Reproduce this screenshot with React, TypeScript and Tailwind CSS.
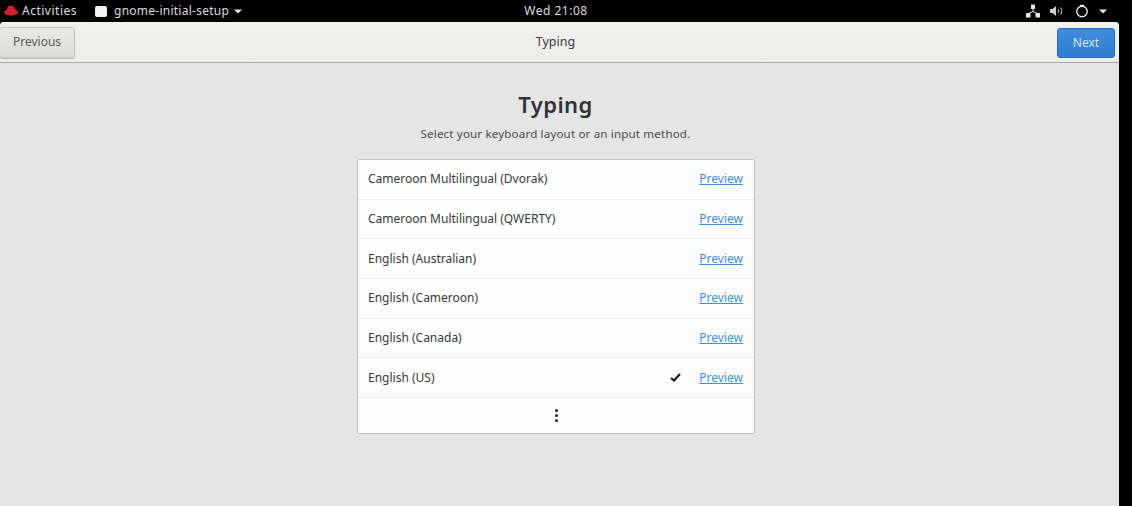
import React from 'react';

const layouts = [
  { name: 'Cameroon Multilingual (Dvorak)' },
  { name: 'Cameroon Multilingual (QWERTY)' },
  { name: 'English (Australian)' },
  { name: 'English (Cameroon)' },
  { name: 'English (Canada)' },
  { name: 'English (US)', selected: true },
];

const Caret = () => (
  <svg width="8" height="5" viewBox="0 0 8 5" className="block">
    <path d="M0 0.5h8L4 4.5z" fill="#e8e8e8" />
  </svg>
);

const TopBar = () => (
  <div className="grid h-[22px] shrink-0 grid-cols-[1fr_auto_1fr] items-center bg-black text-[12px] tracking-[0.5px] text-[#dcdcdc]">
    <div className="flex items-center">
      <svg width="16" height="12" viewBox="0 0 16 12" className="ml-[3px]">
        <path
          d="M5 1.5C6 .6 9 .4 10.5 1.2c.8.5 1 2.200 1.600 3 1 .9 2.900 1.700 2.900 3 0 1.800-3 3.300-7 3.300S1 9 1 7.300C1 6 2 5 3.200 5.200 4 3.800 4.200 2.200 5 1.500z"
          fill="#d3202a"
        />
      </svg>
      <span className="ml-[3px]">Activities</span>
      <div className="ml-[18px] h-[11px] w-[12px] rounded-[2px] bg-[#f2f2f2]" />
      <span className="ml-[7px] tracking-[0.25px]">gnome-initial-setup</span>
      <div className="ml-[5px]">
        <Caret />
      </div>
    </div>
    <span className="mr-[20px]">Wed 21:08</span>
    <div className="flex items-center justify-end pr-[25px]">
      <svg width="14" height="14" viewBox="0 0 14 14">
        <g fill="#e8e8e8">
          <rect x="5" y="0.500" width="4" height="4.500" rx="0.500" />
          <rect x="0" y="9" width="4.500" height="4.500" rx="0.500" />
          <rect x="9.500" y="9" width="4.500" height="4.500" rx="0.500" />
        </g>
        <path d="M7 5v2.500M2.500 9.500L7 7.500l4.500 2" stroke="#e8e8e8" fill="none" />
      </svg>
      <svg width="14" height="12" viewBox="0 0 14 12" className="ml-[10px]">
        <path d="M0 4h2.500L6 1v10L2.500 8H0z" fill="#d0d0d0" />
        <path d="M8 4c1 1 1 3 0 4M10.500 2.500c1.600 2 1.600 5 0 7" stroke="#c8c8c8" fill="none" />
      </svg>
      <svg width="14" height="14" viewBox="0 0 14 14" className="ml-[11px]">
        <circle cx="7" cy="7.500" r="5.200" stroke="#e8e8e8" strokeWidth="1.400" fill="none" />
        <path d="M5 1.500h4" stroke="#e8e8e8" strokeWidth="1.400" />
      </svg>
      <div className="ml-[10px]">
        <Caret />
      </div>
    </div>
  </div>
);

const Header = () => (
  <div className="flex h-[41px] shrink-0 items-center justify-between border-b border-[#a9a9a7] bg-[linear-gradient(#f1f1f0,#ececeb)] pr-[4px]">
    <button className="ml-[-1px] h-[31px] w-[76px] rounded-[3px] border border-[#c4c4c2] bg-[linear-gradient(#e9e9e8,#dbdbd9)] text-center text-[12px] text-[#5b5b5b] shadow-[0_1px_1px_rgba(0,0,0,0.2)]">
      Previous
    </button>
    <span className="mr-[21px] text-[12.500px] text-[#3b3b3b]">Typing</span>
    <button className="mt-[1px] h-[30px] w-[58px] rounded-[3px] border border-[#2a6cb5] bg-[linear-gradient(#3d8ddd,#2f7cd0)] text-center text-[12px] text-[#d5e6f6]">
      Next
    </button>
  </div>
);

const Row = ({ name, selected }: { name: string; selected?: boolean }) => (
  <div className="flex h-[39.7px] items-center border-b border-[#eeeeee] pr-[11px] pl-[10px] text-[12px] text-[#3a3a3a]">
    <span className="flex-1">{name}</span>
    {selected && (
      <svg width="11" height="9" viewBox="0 0 11 9" className="mr-[18px]">
        <path d="M1 5l3 2.500L10 1" stroke="#1a1a1a" strokeWidth="2.200" fill="none" />
      </svg>
    )}
    <span className="text-[#3f8fdc] underline">Preview</span>
  </div>
);

export default function App() {
  return (
    <div className="flex h-[506px] w-[1132px] flex-col overflow-hidden bg-black font-['Noto_Sans',sans-serif]">
      <TopBar />
      <div className="flex w-[1119px] flex-1 flex-col overflow-hidden rounded-t-[4px] bg-[#e6e5e5]">
        <Header />
        <div className="flex flex-col items-center pr-[8px]">
          <h1 className="mt-[25px] text-[22px] leading-[32px] font-semibold tracking-[0.4px] text-[#2e3436]">Typing</h1>
          <p className="mt-[4px] text-[11.600px] leading-[20px] tracking-[0.15px] text-[#4a4a4a]">
            Select your keyboard layout or an input method.
          </p>
          <div className="mt-[15px] ml-[1px] w-[398px] rounded-[2px] border border-[#c3c3c3] bg-[#fdfdfe]">
            {layouts.map((l) => (
              <Row key={l.name} name={l.name} selected={l.selected} />
            ))}
            <div className="flex h-[35px] flex-col items-center justify-center gap-[2px]">
              <div className="size-[3px] rounded-full bg-[#222222]" />
              <div className="size-[3px] rounded-full bg-[#222222]" />
              <div className="size-[3px] rounded-full bg-[#222222]" />
            </div>
          </div>
        </div>
      </div>
    </div>
  );
}
